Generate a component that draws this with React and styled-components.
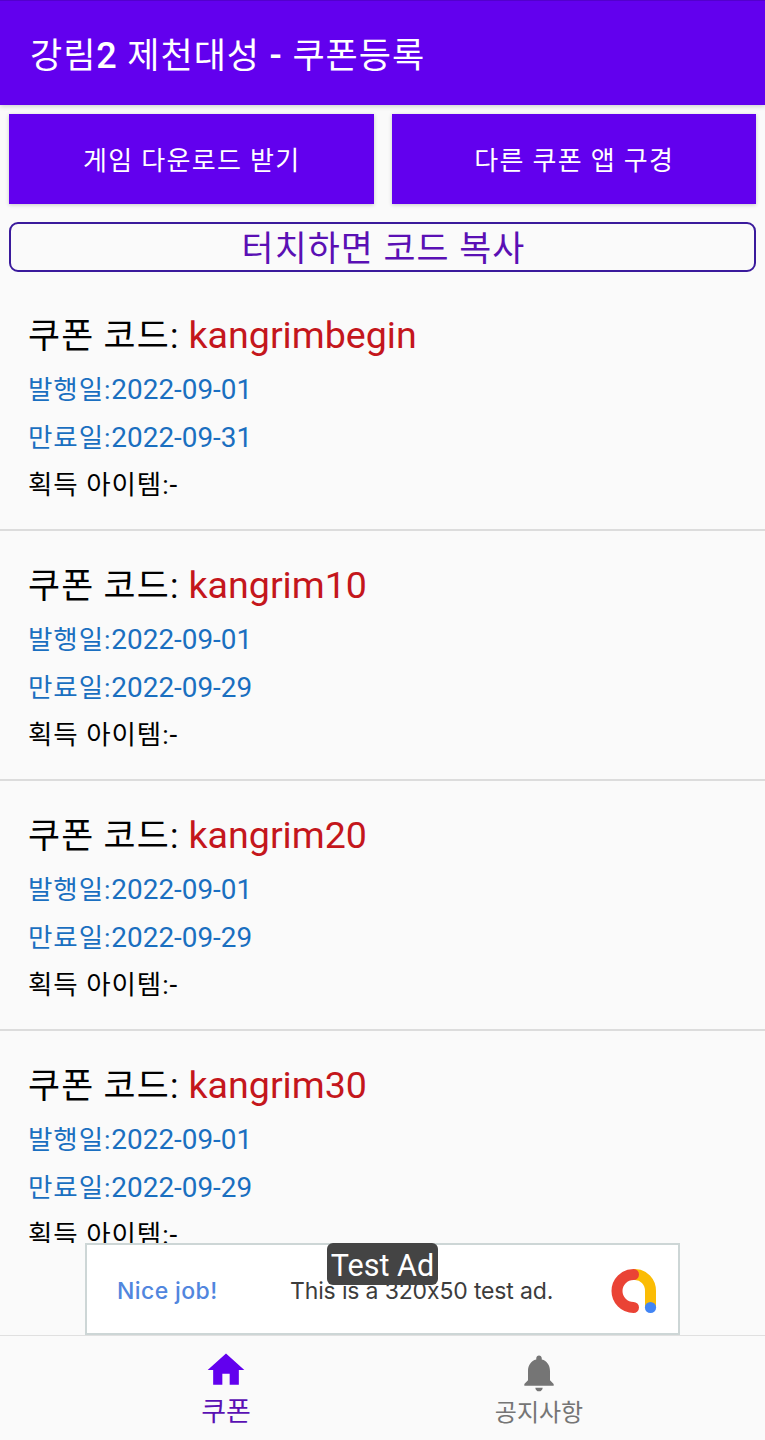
import React from "react";
import styled, { createGlobalStyle } from "styled-components";

const coupons = [
  { code: "kangrimbegin", start: "2022-09-01", end: "2022-09-31", item: "-" },
  { code: "kangrim10", start: "2022-09-01", end: "2022-09-29", item: "-" },
  { code: "kangrim20", start: "2022-09-01", end: "2022-09-29", item: "-" },
  { code: "kangrim30", start: "2022-09-01", end: "2022-09-29", item: "-" },
];

const HomeIcon = () => (
  <svg width="44" height="44" viewBox="0 0 24 24" fill="currentColor">
    <path d="M10 20v-6h4v6h5v-8h3L12 3 2 12h3v8z" />
  </svg>
);

const BellIcon = () => (
  <svg width="44" height="44" viewBox="0 0 24 24" fill="currentColor">
    <path d="M12 22c1.1 0 2-.9 2-2h-4c0 1.1.89 2 2 2zm6-6v-5c0-3.07-1.64-5.64-4.5-6.32V4c0-.83-.67-1.5-1.5-1.5s-1.5.67-1.5 1.5v.68C7.63 5.36 6 7.92 6 11v5l-2 2v1h16v-1l-2-2z" />
  </svg>
);

const AdLogo = () => (
  <svg width="47" height="46" viewBox="0 0 47 46" fill="none">
    <path
      d="M22 6.5h2A15.5 16.5 0 0 1 39.5 23v16"
      stroke="#fbbc04"
      strokeWidth="11"
    />
    <path
      d="M22.5 6.5a16.5 16.5 0 0 0 0 33"
      stroke="#ea4335"
      strokeWidth="11"
      strokeLinecap="round"
    />
    <circle cx="39.5" cy="39.5" r="5.6" fill="#4285f4" />
  </svg>
);

const App = () => {
  return (
    <>
      <GlobalStyle />
      <Container>
        <Header>
          <Title>
            강림<Strong>2</Strong> 제천대성 <Strong>-</Strong> 쿠폰등록
          </Title>
        </Header>
        <Buttons>
          <Button>게임 다운로드 받기</Button>
          <Button>다른 쿠폰 앱 구경</Button>
        </Buttons>
        <Guide>터치하면 코드 복사</Guide>
        <List>
          {coupons.map((coupon) => (
            <Coupon key={coupon.code}>
              <CodeLine>
                쿠폰 코드: <Code>{coupon.code}</Code>
              </CodeLine>
              <Line $color="#1a6fc0">
                발행일:<Value>{coupon.start}</Value>
              </Line>
              <Line $color="#1a6fc0">
                만료일:<Value>{coupon.end}</Value>
              </Line>
              <Line>
                획득 아이템:<Value>{coupon.item}</Value>
              </Line>
            </Coupon>
          ))}
        </List>
        <AdArea>
          <Ad>
            <AdTitle>Nice job!</AdTitle>
            <AdText>This is a 320x50 test ad.</AdText>
            <AdLogo />
            <AdBadge>Test Ad</AdBadge>
          </Ad>
        </AdArea>
        <Nav>
          <Tab $active>
            <HomeIcon />
            <TabName $active>쿠폰</TabName>
          </Tab>
          <Tab>
            <BellIcon />
            <TabName>공지사항</TabName>
          </Tab>
        </Nav>
      </Container>
    </>
  );
};

const GlobalStyle = createGlobalStyle`
  * {
    box-sizing: border-box;
  }
  body {
    margin: 0;
    font-family: Roboto, "Noto Sans CJK KR", sans-serif;
  }
`;

const Container = styled.div`
  display: flex;
  flex-direction: column;
  width: 765px;
  height: 1440px;
  overflow: hidden;
  background: #fafafa;
`;

const Header = styled.header`
  display: flex;
  align-items: center;
  flex: none;
  height: 105px;
  padding: 0 30px 1px;
  background: #6200ee;
  border-top: 1px solid #5300cc;
  box-shadow: 0 1px 5px rgba(0, 0, 0, 0.2);
`;

const Title = styled.h1`
  margin: 0;
  color: #fff;
  font-size: 35px;
  font-weight: 400;
  letter-spacing: 0.95px;
  white-space: nowrap;
`;

const Strong = styled.span`
  font-size: 36px;
  font-weight: 500;
`;

const Buttons = styled.div`
  display: flex;
  flex: none;
  gap: 18px;
  padding: 9px 9px 0;
`;

const Button = styled.button`
  flex: 1;
  height: 90px;
  padding: 0 0 2px 1px;
  border: 0;
  background: #6200ee;
  box-shadow: 0 1px 4px rgba(0, 0, 0, 0.2);
  color: #fff;
  font-family: inherit;
  font-size: 26px;
  letter-spacing: 1.3px;
`;

const Guide = styled.div`
  display: flex;
  align-items: center;
  justify-content: center;
  flex: none;
  height: 50px;
  margin: 18px 9px 9px;
  padding: 0 0 2px 2px;
  border: 2px solid #3a1a9c;
  border-radius: 9px;
  color: #5a10b4;
  font-size: 34.8px;
  letter-spacing: 1.05px;
`;

const List = styled.ul`
  flex: 1;
  min-height: 0;
  margin: 0;
  padding: 0;
  overflow: hidden;
  list-style: none;
`;

const Coupon = styled.li`
  height: 250px;
  padding: 28px 28px 0;
  border-bottom: 2px solid #dcdcdc;
`;

const CodeLine = styled.div`
  height: 57px;
  line-height: 53px;
  color: #000;
  font-size: 34.8px;
  letter-spacing: 1.2px;
  word-spacing: -0.8px;
`;

const Code = styled.span`
  color: #c4161c;
  font-size: 37.6px;
  letter-spacing: 0;
`;

const Line = styled.div`
  height: 47.5px;
  line-height: 47.5px;
  color: ${({ $color }) => $color || "#000"};
  font-size: 26.5px;
  letter-spacing: 0.95px;
`;

const Value = styled.span`
  font-size: 27.9px;
  letter-spacing: 0;
`;

const AdArea = styled.div`
  display: flex;
  justify-content: center;
  flex: none;
  height: 92px;
`;

const Ad = styled.div`
  position: relative;
  display: flex;
  align-items: center;
  width: 595px;
  height: 92px;
  padding: 3px 20px 0 30px;
  border: 2px solid #cdd6d6;
  background: #fff;
  font-family: Inter, sans-serif;
  font-size: 23px;
`;

const AdTitle = styled.span`
  width: 173px;
  color: #5186de;
  font-weight: 500;
  letter-spacing: 0.4px;
`;

const AdText = styled.span`
  flex: 1;
  color: #3c3c3c;
  font-feature-settings: "calt" 0;
  letter-spacing: -0.15px;
  white-space: nowrap;
`;

const AdBadge = styled.span`
  position: absolute;
  top: -2px;
  left: 240px;
  width: 111px;
  height: 42px;
  border-radius: 6px;
  background: #444;
  color: #fff;
  font-family: Roboto, sans-serif;
  font-size: 30.5px;
  line-height: 45px;
  text-align: center;
`;

const Nav = styled.nav`
  display: flex;
  justify-content: center;
  flex: none;
  height: 105px;
  border-top: 1px solid #e0e0e0;
`;

const Tab = styled.div`
  display: flex;
  flex-direction: column;
  align-items: center;
  width: 313px;
  padding-top: ${({ $active }) => ($active ? "12px" : "15px")};
  color: ${({ $active }) => ($active ? "#6200ee" : "#757575")};
`;

const TabName = styled.span`
  color: ${({ $active }) => ($active ? "#5a10b4" : "#757575")};
  font-size: ${({ $active }) => ($active ? "27px" : "24px")};
  line-height: ${({ $active }) => ($active ? "41px" : "37px")};
`;

export default App;
